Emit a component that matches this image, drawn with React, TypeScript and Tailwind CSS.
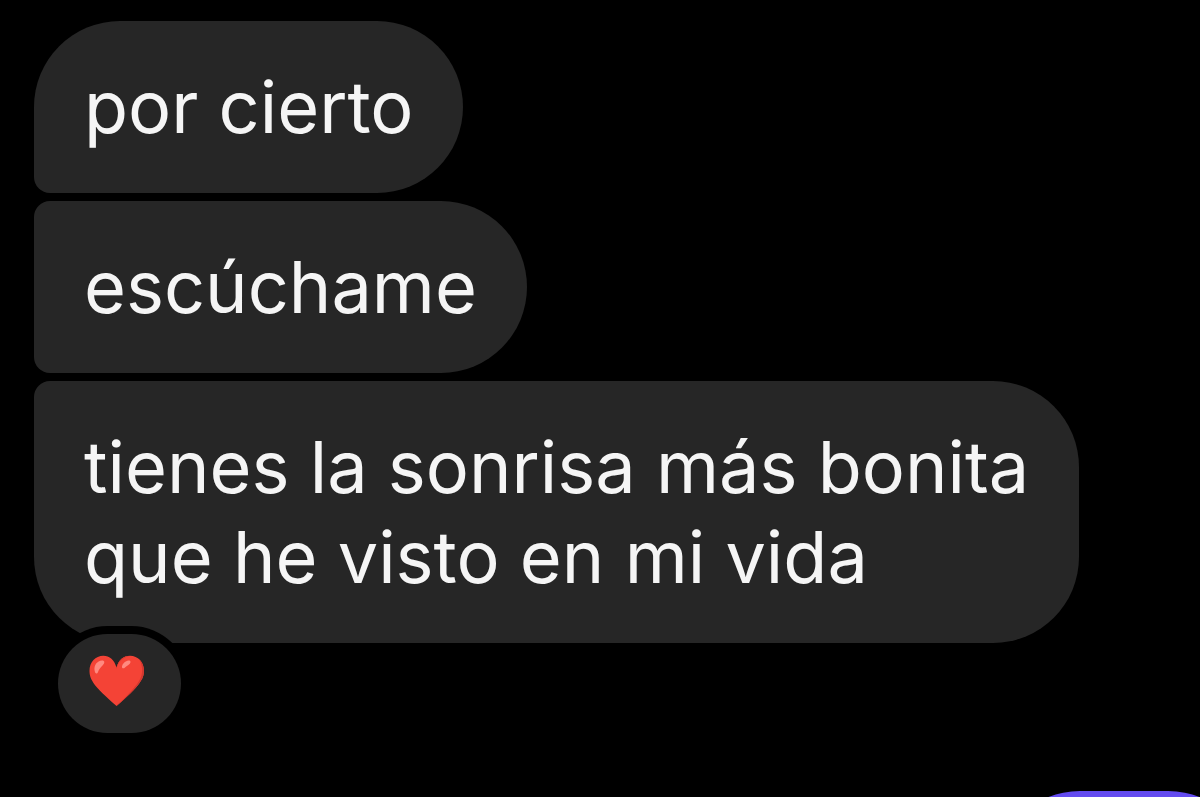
import clsx from "clsx";

interface Message {
  id: number;
  text: string;
  reaction?: boolean;
}

const messages: Message[] = [
  { id: 1, text: "por cierto" },
  { id: 2, text: "escúchame" },
  {
    id: 3,
    text: "tienes la sonrisa más bonita\nque he visto en mi vida",
    reaction: true,
  },
];

function HeartIcon() {
  return (
    <svg viewBox="0 0 56 52" className="h-[52px] w-14" aria-hidden="true">
      <defs>
        <clipPath id="heart">
          <path d="M27.5 51C25.5 49 15 40.5 8 32.5C2.5 26 .5 21.5.5 16C.5 7 6.5.7 14.3.7C20.5.7 25.5 5 27.5 12.5C29.5 5 34.5.7 41 .7C49 .7 55 7 55 16C55 21.5 52.5 26 47 32.5C40 40.5 29.5 49 27.5 51Z" />
        </clipPath>
      </defs>
      <g clipPath="url(#heart)">
        <rect width="56" height="52" fill="#f44336" />
        <path
          d="M47 0C54 7 55 18 50 26C45 34 37 42 26 52H56V0Z"
          fill="#d3382f"
        />
        <path d="M27.5 14C29 7 34 2.5 40 1L36 0L27 6Z" fill="#d83a31" />
      </g>
      <path
        d="M13 5.5C8 6 5 10 5.5 15C6 19 8 19.5 9 17C10 14 11.5 12.5 13.5 10.5C16 8 16 5.5 13 5.5Z"
        fill="#ff8a80"
      />
      <path
        d="M39.5 5.5C36.5 6 33.5 8.5 33 11.5C32.8 13.5 34.5 14 36 12.5C37.5 11 39 10.5 40.5 9C42 7.5 42 5.5 39.5 5.5Z"
        fill="#ff8a80"
      />
    </svg>
  );
}

export default function App() {
  return (
    <main className="flex h-screen flex-col overflow-hidden bg-black pt-[21px] font-['Inter',sans-serif]">
      <ul className="flex shrink-0 flex-col items-start gap-2 pr-16 pl-[34px]">
        {messages.map((message, index) => (
          <li key={message.id} className="max-w-full">
            <p
              className={clsx(
                "rounded-r-[86px] bg-[#262626] px-[50px] py-[41px] text-[72px] leading-[90px] whitespace-pre-line text-[#f5f5f5]",
                index === 0 ? "rounded-tl-[86px]" : "rounded-tl-[16px]",
                index === messages.length - 1
                  ? "rounded-bl-[86px]"
                  : "rounded-bl-[16px]"
              )}
            >
              {message.text}
            </p>
            {message.reaction && (
              <button
                type="button"
                aria-label="Reacción: corazón"
                className="relative -mt-[9px] ml-6 flex rounded-full bg-[#262626] pt-[21px] pr-9 pb-[26px] pl-[31px] ring-8 ring-black"
              >
                <HeartIcon />
              </button>
            )}
          </li>
        ))}
      </ul>

      {/* Outgoing message, continues below the fold */}
      <div className="mt-[58px] -mr-[54px] h-[172px] w-[260px] shrink-0 self-end rounded-[86px] bg-[#634bf0]" />
    </main>
  );
}
